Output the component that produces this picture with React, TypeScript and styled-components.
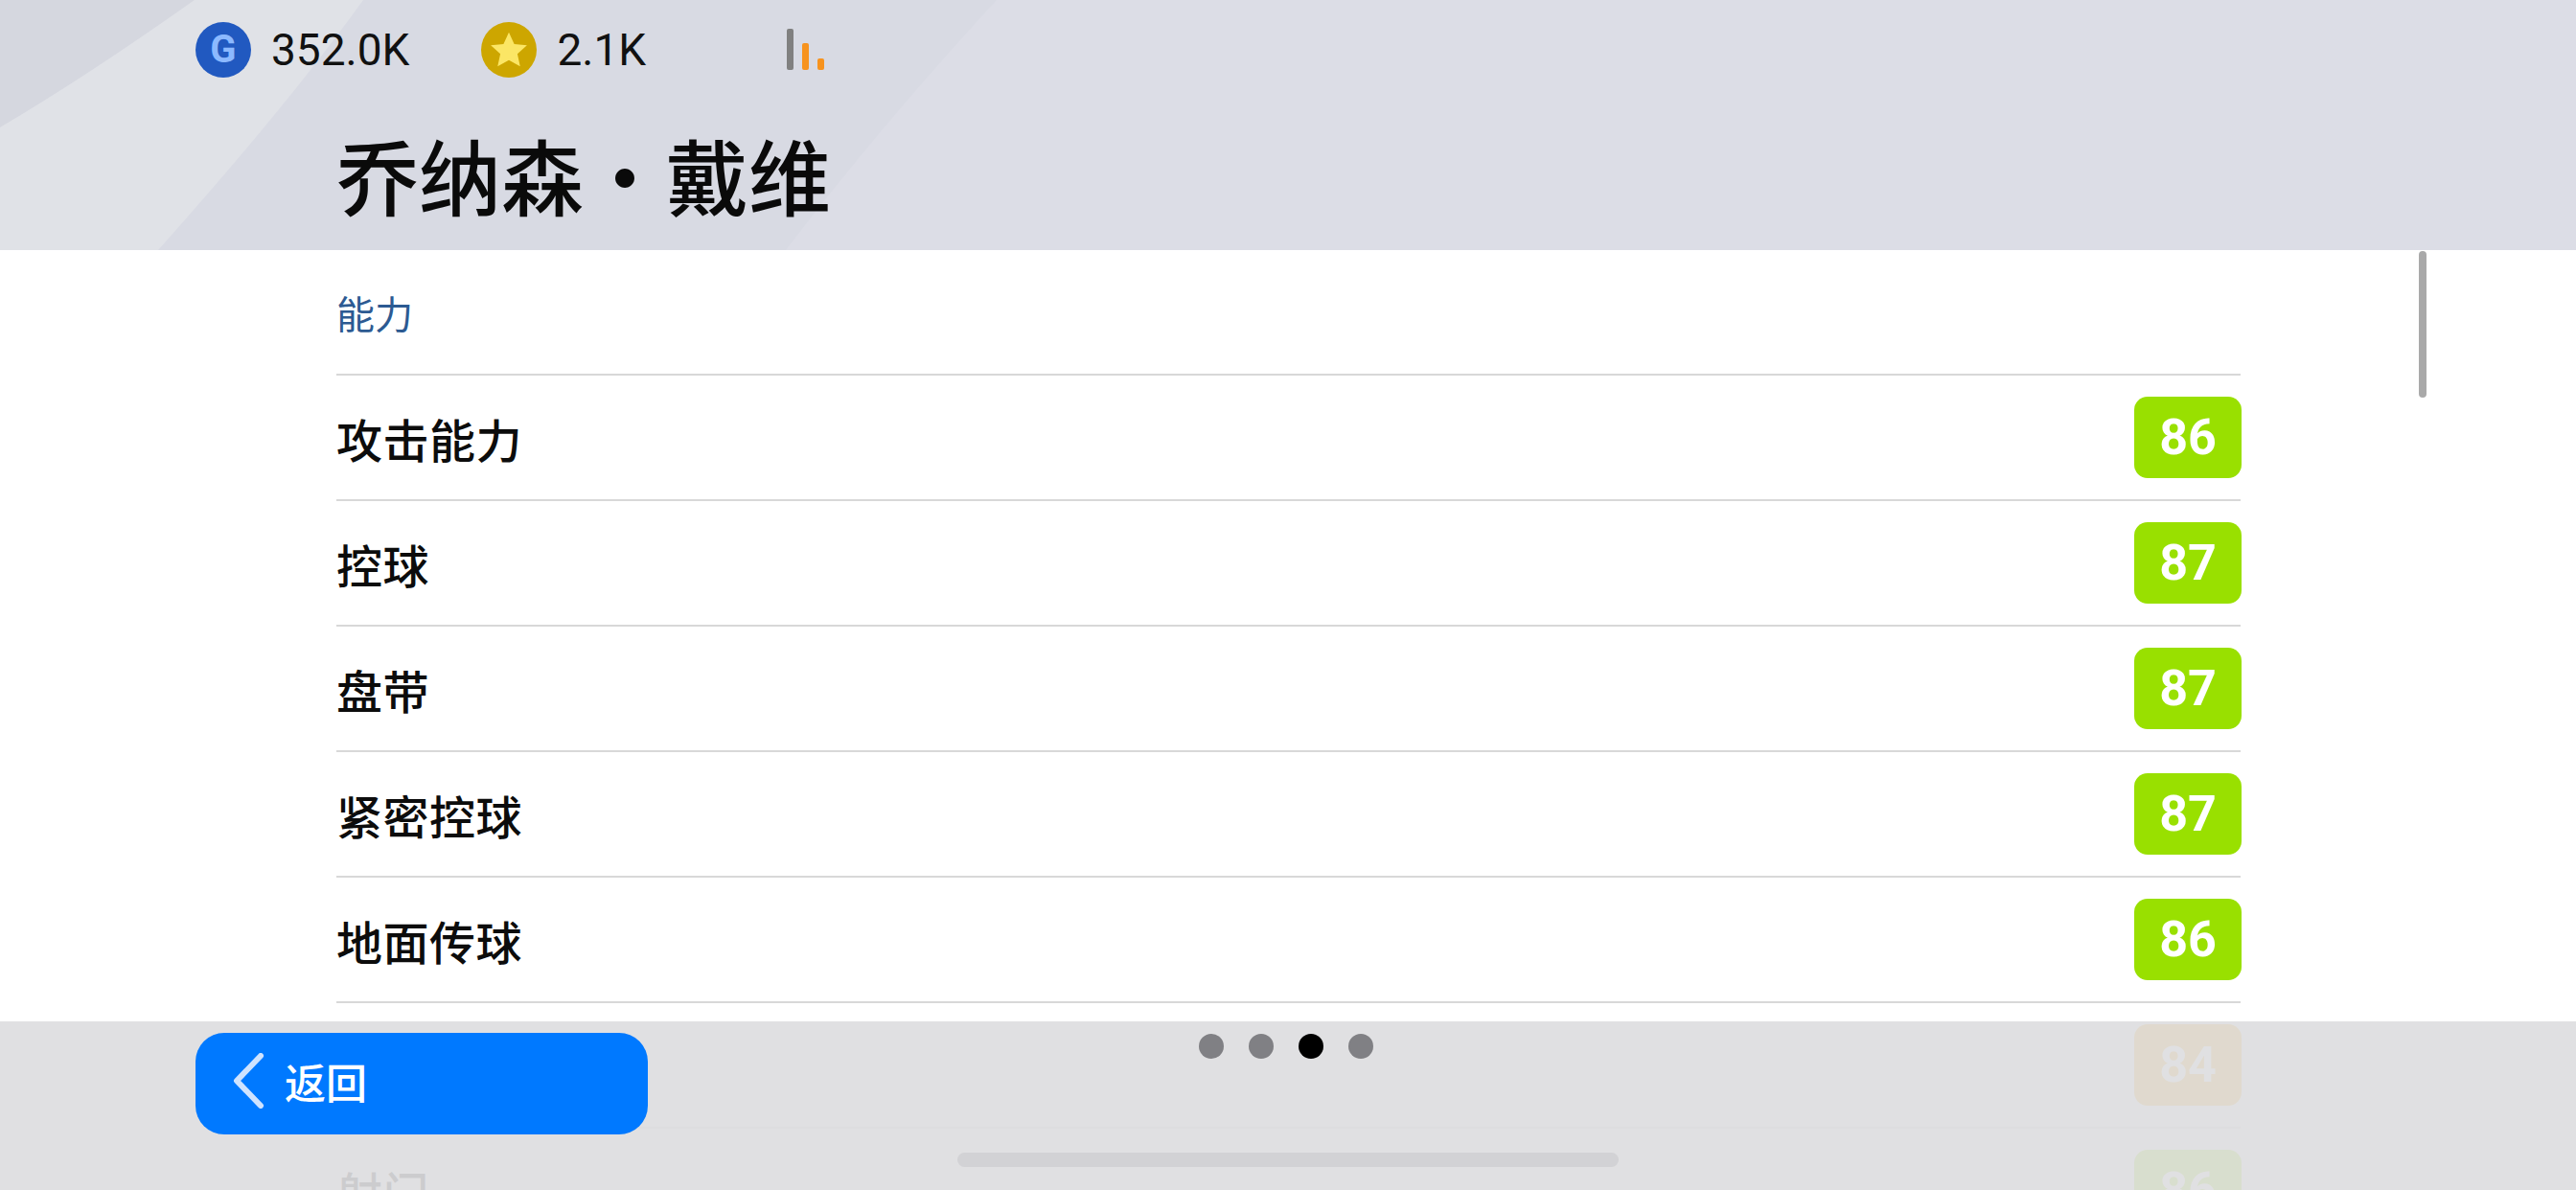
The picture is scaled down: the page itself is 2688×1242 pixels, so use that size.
import React from 'react';
import styled, { createGlobalStyle } from 'styled-components';

const Global = createGlobalStyle`
  html, body { margin: 0; padding: 0; background: #fff; }
  * { box-sizing: border-box; }
`;

const CJK = `"Noto Sans CJK SC", "Noto Sans", sans-serif`;
const NUM = `"Liberation Sans Narrow", Roboto, "Noto Sans", sans-serif`;

const Screen = styled.div`
  position: relative;
  width: 2688px;
  height: 1242px;
  overflow: hidden;
  display: flex;
  flex-direction: column;
  background: #fff;
  font-family: ${CJK};
`;

const Header = styled.header`
  position: relative;
  flex: 0 0 261px;
  padding: 23px 0 0 204px;
  background: #dcdde6;
  overflow: hidden;
`;

const HeaderArt = styled.svg`
  position: absolute;
  inset: 0;
`;

const StatusBar = styled.div`
  position: relative;
  display: flex;
  align-items: center;
  height: 57px;
`;

const Wallet = styled.div<{ $gap: number }>`
  display: flex;
  align-items: center;
  gap: 21px;
  margin-right: ${p => p.$gap}px;
`;

const Coin = styled.div<{ $bg: string }>`
  width: 58px;
  height: 58px;
  border-radius: 50%;
  background: ${p => p.$bg};
  display: flex;
  align-items: center;
  justify-content: center;
  font: 700 40px Roboto, sans-serif;
  color: #8cb9ff;
`;

const Amount = styled.span`
  font: 400 46px/1 ${NUM};
  color: #111;
`;

const Signal = styled.div`
  display: flex;
  align-items: flex-end;
  gap: 9px;
  height: 43px;
`;

const SignalBar = styled.i<{ $h: number; $c: string }>`
  display: block;
  width: 7px;
  height: ${p => p.$h}px;
  border-radius: 2px;
  background: ${p => p.$c};
`;

const Title = styled.h1`
  position: relative;
  margin: 52px 0 0 147px;
  font: 500 86px/100px ${CJK};
  color: #0a0a0a;
`;

const Body = styled.main`
  position: relative;
  flex: 1;
  overflow: hidden;
  padding: 0 350px 0 351px;
`;

const ScrollThumb = styled.div`
  position: absolute;
  top: 1px;
  right: 156px;
  width: 8px;
  height: 153px;
  border-radius: 4px;
  background: #a9a9a9;
`;

const SectionTitle = styled.div`
  height: 131px;
  display: flex;
  align-items: center;
  padding-top: 1px;
  border-bottom: 2px solid #d8d8d8;
  font-size: 40px;
  color: #2c5a92;
`;

const Row = styled.div`
  height: 131px;
  display: flex;
  align-items: center;
  justify-content: space-between;
  border-bottom: 2px solid #d8d8d8;
`;

const Label = styled.span`
  font-size: 48px;
  font-weight: 500;
  letter-spacing: 0.5px;
  color: #0c0c0c;
`;

const Badge = styled.div<{ $bg: string }>`
  width: 112px;
  height: 85px;
  margin-right: -1px;
  border-radius: 14px;
  background: ${p => p.$bg};
  display: flex;
  align-items: center;
  justify-content: center;
  font: 700 52px/1 ${NUM};
  color: #fff;
`;

const Footer = styled.footer`
  position: absolute;
  left: 0;
  right: 0;
  bottom: 0;
  height: 176px;
  padding: 12px 0 0 204px;
  display: flex;
  align-items: flex-start;
  background: rgba(221, 221, 224, 0.92);
`;

const BackButton = styled.button`
  width: 472px;
  height: 106px;
  padding: 0 0 6px 38px;
  border: 0;
  border-radius: 30px;
  background: #0079ff;
  display: flex;
  align-items: center;
  gap: 21px;
  font: 500 43px ${CJK};
  color: #fff;
`;

const Dots = styled.div`
  display: flex;
  gap: 26px;
  margin: 1px 0 0 575px;
`;

const Dot = styled.i<{ $on?: boolean }>`
  display: block;
  width: 26px;
  height: 26px;
  border-radius: 50%;
  background: ${p => (p.$on ? '#000' : '#808084')};
`;

const HomeBar = styled.div`
  position: absolute;
  left: 999px;
  bottom: 24px;
  width: 690px;
  height: 15px;
  border-radius: 8px;
  background: #d2d2d5;
`;

const stats = [
  { name: '攻击能力', value: 86, color: '#99e000' },
  { name: '控球', value: 87, color: '#99e000' },
  { name: '盘带', value: 87, color: '#99e000' },
  { name: '紧密控球', value: 87, color: '#99e000' },
  { name: '地面传球', value: 86, color: '#99e000' },
  { name: '高球传球', value: 84, color: '#ffa800' },
  { name: '射门', value: 86, color: '#99e000' },
];

export default function App() {
  return (
    <Screen>
      <Global />
      <Header>
        <HeaderArt width="2688" height="261" viewBox="0 0 2688 261">
          <path d="M0 0H1040Q920 130 820 261H0Z" fill="#d8dae3" />
          <path d="M0 0H203Q90 80 0 133Z" fill="#d5d7df" />
          <path d="M203 0H379Q300 110 165 261H0V133Q90 80 203 0Z" fill="#e0e2e7" />
        </HeaderArt>
        <StatusBar>
          <Wallet $gap={75}>
            <Coin $bg="#2159c0">G</Coin>
            <Amount>352.0K</Amount>
          </Wallet>
          <Wallet $gap={147}>
            <Coin $bg="#cda600">
              <svg width="42" height="42" viewBox="0 0 24 24">
                <path d="M12 1.5l3.2 7 7.6.8-5.7 5.1 1.6 7.5L12 18.1l-6.700 3.800 1.600-7.500L1.200 9.300l7.600-.8z" fill="#fbe665" />
              </svg>
            </Coin>
            <Amount>2.1K</Amount>
          </Wallet>
          <Signal>
            <SignalBar $h={43} $c="#808080" />
            <SignalBar $h={28} $c="#f7931e" />
            <SignalBar $h={12} $c="#f7931e" />
          </Signal>
        </StatusBar>
        <Title>乔纳森·戴维</Title>
      </Header>
      <Body>
        <SectionTitle>能力</SectionTitle>
        {stats.map(s => (
          <Row key={s.name}>
            <Label>{s.name}</Label>
            <Badge $bg={s.color}>{s.value}</Badge>
          </Row>
        ))}
        <ScrollThumb />
      </Body>
      <Footer>
        <BackButton>
          <svg width="34" height="58" viewBox="0 0 34 58" fill="none">
            <path d="M30 3L5 29l25 26" stroke="#cfe3ff" strokeWidth="6" strokeLinecap="round" strokeLinejoin="round" />
          </svg>
          返回
        </BackButton>
        <Dots>
          <Dot />
          <Dot />
          <Dot $on />
          <Dot />
        </Dots>
        <HomeBar />
      </Footer>
    </Screen>
  );
}
